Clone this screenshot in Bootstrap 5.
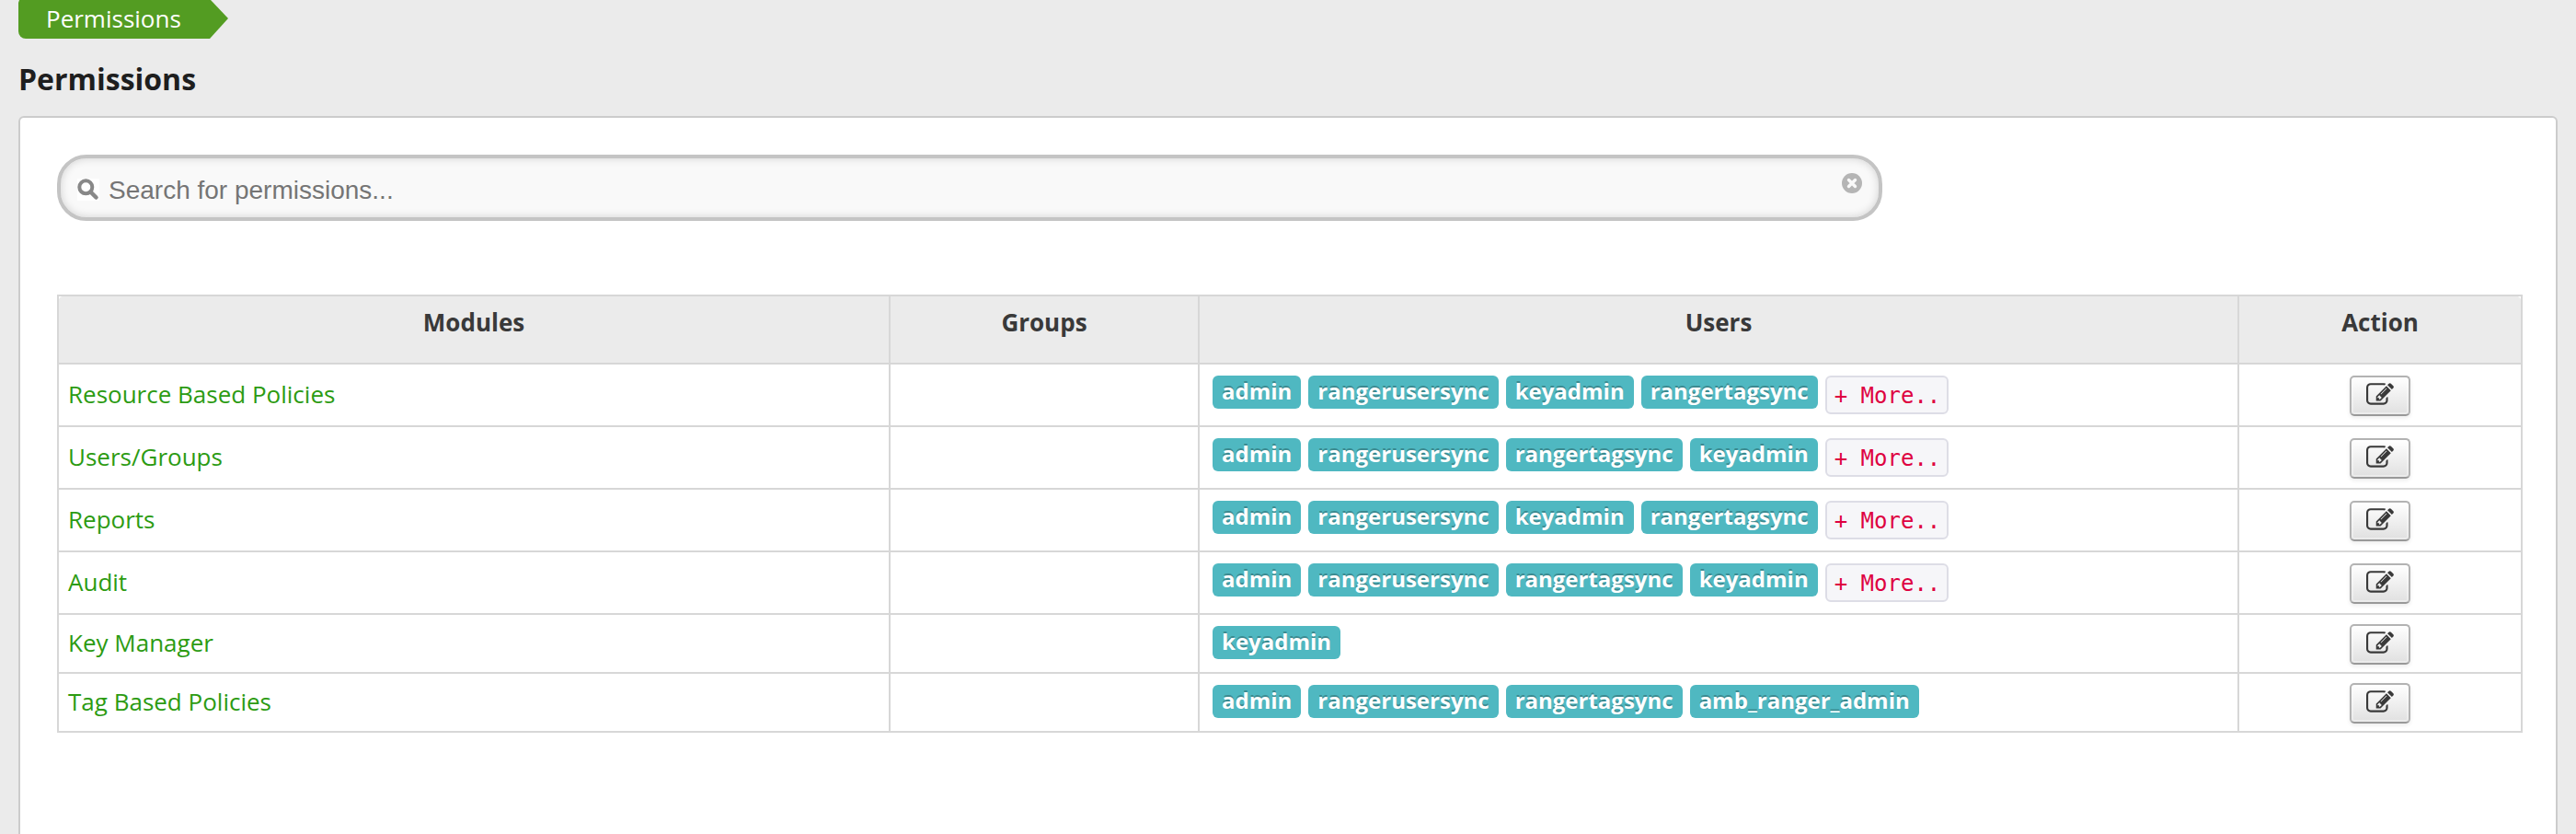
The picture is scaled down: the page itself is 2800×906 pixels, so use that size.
<!DOCTYPE html>
<html lang="en">
<head>
<meta charset="utf-8">
<title>Permissions</title>
<link rel="stylesheet" href="https://cdn.jsdelivr.net/npm/bootstrap@5.3.0/dist/css/bootstrap.min.css">
<style>
body{background:#ebebeb;font-family:"Open Sans",sans-serif;font-size:26px;line-height:40px;color:#333;height:906px;overflow:hidden}
.page-wrap{width:2760px}
.crumb{height:42px;width:228px;border-radius:0 0 0 8px;color:#fff;padding-left:30px;line-height:40px;clip-path:polygon(1px 0,209px 0,228px 20px,208px 42px,0 42px,0 3px);background:#539c22}
.page-title{font-size:32px;font-weight:700;line-height:40px;color:#1e1e1e;margin:24px 0 0}
.panel{margin-top:20px;height:800px;border:2px solid #ccc;border-radius:6px;padding:40px 36px 0 40px}
.search-box{width:1984px;height:72px;border:4px solid #c4c4c4;border-radius:32px;background:#f9f9f9;box-shadow:inset 0 0 10px rgba(0,0,0,.16);padding:0 18px}
.search-box input{font-family:"Liberation Sans",sans-serif;font-size:28px;line-height:36px;color:#555;margin:5px 0 0 10px}
.search-box input::placeholder{color:#757575;opacity:1}
.search-icon{background:#fff;margin-top:4px}
.clear-icon{margin:-10px 0 0}
.perm-table{margin:80px 0 0;width:2680px;table-layout:fixed;border-collapse:collapse;color:#393939}
.perm-table th,.perm-table td{border:2px solid #d7d7d7;padding:0 10px;height:68px;vertical-align:top}
.perm-table th{height:74px;background:#ebebeb;text-align:center;padding-top:8px}
.perm-table th:first-child{border-top-left-radius:8px}
.perm-table th:last-child{border-top-right-radius:8px}
.perm-table tr.short td{height:64px}
.perm-table td:first-child{padding-top:12px;color:#2c9b12}
.perm-table tr.short td:first-child{padding-top:10px}
.perm-table td.users{padding:12px 14px 0}
.perm-table td.action{padding-top:12px}
.perm-table tr.short td.action{padding-top:10px}
.user-tag{height:36px;border-radius:6px;background:#4fb8c1;color:#fff;font-size:24px;font-weight:700;line-height:28px;padding:3px 10px 0;text-shadow:0 -2px 0 rgba(0,0,0,.25);white-space:nowrap}
.more-tag{height:42px;width:134px;border:2px solid #dddde6;border-radius:6px;background:#f6f6f9;color:#de0040;font-family:"DejaVu Sans Mono",monospace;font-size:24px;line-height:40px;padding-left:8px;white-space:pre}
.edit-btn{width:66px;height:44px;border:2px solid #b3b3b3;border-bottom-color:#999;border-radius:5px;background:linear-gradient(#fff,#e0e0e0);box-shadow:0 2px 4px rgba(0,0,0,.08),inset 0 0 0 2px rgba(255,255,255,.35);padding:4px 0 0}
</style>
<script src="https://cdn.jsdelivr.net/npm/bootstrap@5.3.0/dist/js/bootstrap.bundle.min.js"></script>
</head>
<body>
<svg class="d-none"><symbol id="edit" viewBox="0 0 1792 1792"><path fill="#393939" d="M888 1184l116-116-152-152-116 116v56h96v96h56zm440-720q-16-16-33 1l-350 350q-17 17-1 33t33-1l350-350q17-17 1-33zm80 594v190q0 119-84.5 203.5t-203.5 84.5h-832q-119 0-203.5-84.5t-84.5-203.5v-832q0-119 84.5-203.5t203.5-84.5h832q63 0 117 25 15 7 18 23 3 17-9 29l-49 49q-14 14-32 8-23-6-45-6h-832q-66 0-113 47t-47 113v832q0 66 47 113t113 47h832q66 0 113-47t47-113v-126q0-13 9-22l64-64q15-15 35-7t20 29zm-96-738l288 288-672 672h-288v-288zm444 132l-92 92-288-288 92-92q28-28 68-28t68 28l152 152q28 28 28 68t-28 68z"/></symbol></svg>
<main class="page-wrap mx-auto">
<nav class="crumb">Permissions</nav>
<h1 class="page-title">Permissions</h1>
<section class="panel bg-white">
<div class="search-box d-flex align-items-center">
<svg class="search-icon flex-shrink-0" width="24" height="24" viewBox="0 0 24 24" fill="none" stroke="#888"><circle cx="9.3" cy="9.3" r="7" stroke-width="4"/><path d="M14.5 14.5l6 6" stroke-width="4.5" stroke-linecap="round"/></svg>
<input class="border-0 bg-transparent p-0 flex-grow-1" type="text" placeholder="Search for permissions...">
<svg class="clear-icon flex-shrink-0" width="22" height="22" viewBox="0 0 22 22"><circle cx="11" cy="11" r="11" fill="#b5b5b5"/><path d="M7.5 7.5l7 7m0-7l-7 7" stroke="#f9f9f9" stroke-width="3.4" stroke-linecap="round"/></svg>
</div>
<table class="perm-table">
<colgroup><col style="width:904px"><col style="width:336px"><col style="width:1130px"><col style="width:308px"></colgroup>
<thead><tr><th>Modules</th><th>Groups</th><th>Users</th><th>Action</th></tr></thead>
<tbody>
<tr><td>Resource Based Policies</td><td></td><td class="users"><div class="d-flex gap-2"><span class="user-tag">admin</span><span class="user-tag">rangerusersync</span><span class="user-tag">keyadmin</span><span class="user-tag">rangertagsync</span><span class="more-tag">+ More..</span></div></td><td class="action"><button class="edit-btn d-flex justify-content-center mx-auto"><svg class="flex-shrink-0" width="30" height="30"><use href="#edit"/></svg></button></td></tr>
<tr><td>Users/Groups</td><td></td><td class="users"><div class="d-flex gap-2"><span class="user-tag">admin</span><span class="user-tag">rangerusersync</span><span class="user-tag">rangertagsync</span><span class="user-tag">keyadmin</span><span class="more-tag">+ More..</span></div></td><td class="action"><button class="edit-btn d-flex justify-content-center mx-auto"><svg class="flex-shrink-0" width="30" height="30"><use href="#edit"/></svg></button></td></tr>
<tr><td>Reports</td><td></td><td class="users"><div class="d-flex gap-2"><span class="user-tag">admin</span><span class="user-tag">rangerusersync</span><span class="user-tag">keyadmin</span><span class="user-tag">rangertagsync</span><span class="more-tag">+ More..</span></div></td><td class="action"><button class="edit-btn d-flex justify-content-center mx-auto"><svg class="flex-shrink-0" width="30" height="30"><use href="#edit"/></svg></button></td></tr>
<tr><td>Audit</td><td></td><td class="users"><div class="d-flex gap-2"><span class="user-tag">admin</span><span class="user-tag">rangerusersync</span><span class="user-tag">rangertagsync</span><span class="user-tag">keyadmin</span><span class="more-tag">+ More..</span></div></td><td class="action"><button class="edit-btn d-flex justify-content-center mx-auto"><svg class="flex-shrink-0" width="30" height="30"><use href="#edit"/></svg></button></td></tr>
<tr class="short"><td>Key Manager</td><td></td><td class="users"><div class="d-flex gap-2"><span class="user-tag">keyadmin</span></div></td><td class="action"><button class="edit-btn d-flex justify-content-center mx-auto"><svg class="flex-shrink-0" width="30" height="30"><use href="#edit"/></svg></button></td></tr>
<tr class="short"><td>Tag Based Policies</td><td></td><td class="users"><div class="d-flex gap-2"><span class="user-tag">admin</span><span class="user-tag">rangerusersync</span><span class="user-tag">rangertagsync</span><span class="user-tag">amb_ranger_admin</span></div></td><td class="action"><button class="edit-btn d-flex justify-content-center mx-auto"><svg class="flex-shrink-0" width="30" height="30"><use href="#edit"/></svg></button></td></tr>
</tbody>
</table>
</section>
</main>
</body>
</html>
